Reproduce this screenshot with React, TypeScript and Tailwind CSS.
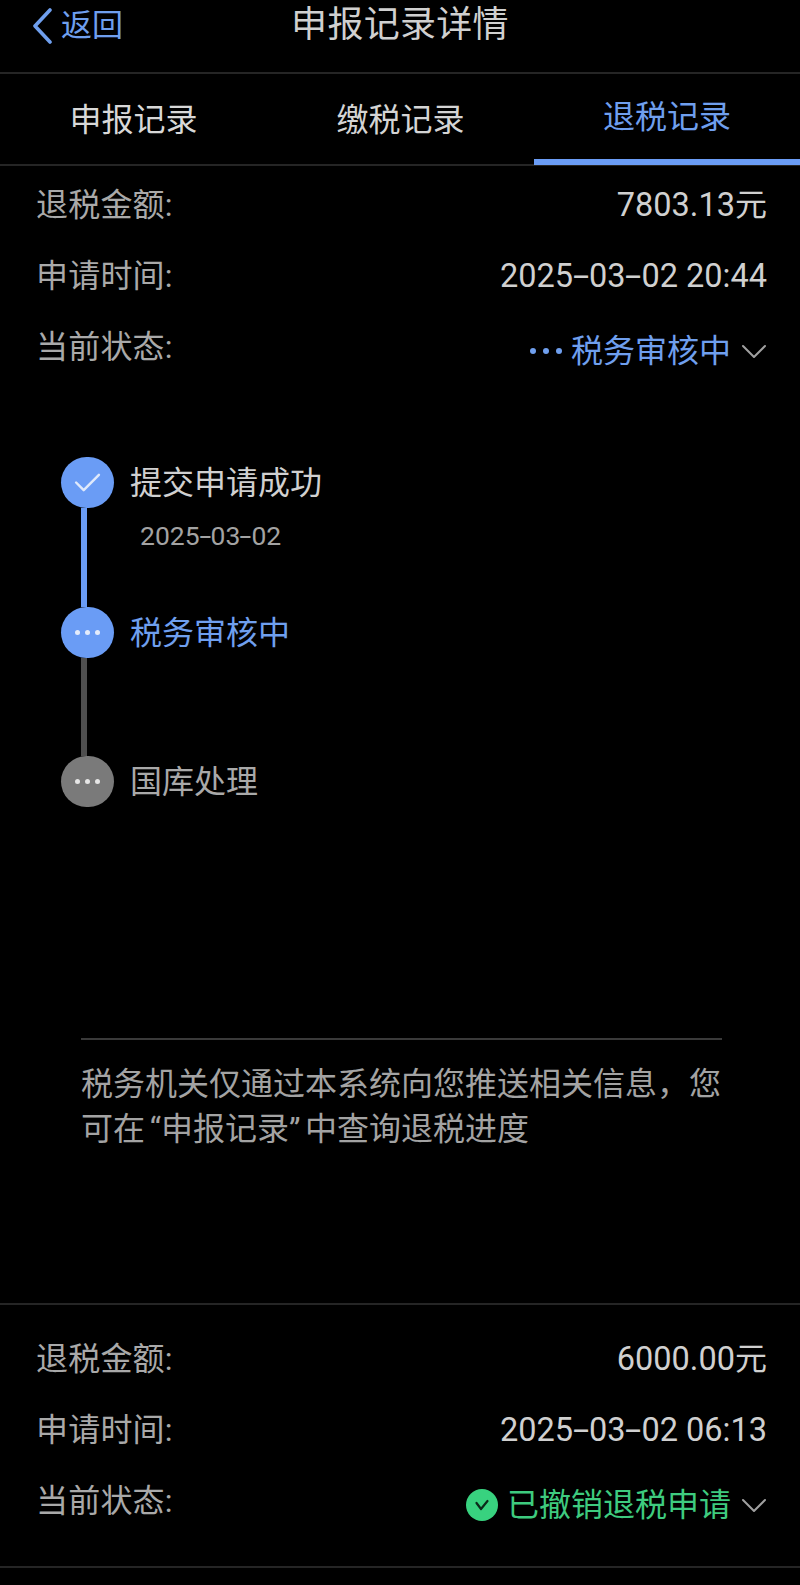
const font = "font-['Roboto','Noto_Sans_CJK_SC',sans-serif]";

function Chevron({ className }: { className: string }) {
  return (
    <svg viewBox="0 0 26 16" className={className} fill="none" stroke="currentColor" strokeWidth="2" strokeLinecap="round" strokeLinejoin="round">
      <path d="M2 3 L13 14 L24 3" />
    </svg>
  );
}

function DateText({ parts, hyphen }: { parts: string[]; hyphen: string }) {
  return (
    <>
      {parts.map((p, i) => (
        <span key={i}>
          {i > 0 && <span className={hyphen}>-</span>}
          {p}
        </span>
      ))}
    </>
  );
}

const rowHyphen = "inline-block w-[16px] text-center scale-x-[1.8]";
const smallHyphen = "inline-block w-[11px] text-center scale-x-[1.6]";

function Row({ label, children }: { label: string; children: React.ReactNode }) {
  return (
    <div className="flex justify-between items-center h-[71px] pl-[36px] pr-[33px]">
      <span className="text-[#a9a9a9] text-[32px] leading-none tracking-[0.2px] -mt-[1px]">{label}</span>
      <span className="text-[#d0d0d0] text-[32.5px] leading-none whitespace-nowrap">{children}</span>
    </div>
  );
}

function StatusRow({ children }: { children: React.ReactNode }) {
  return (
    <div className="flex justify-between items-center h-[71px] pl-[36px] pr-[33px]">
      <span className="text-[#a9a9a9] text-[32px] leading-none tracking-[0.2px] -mt-[1px]">当前状态:</span>
      <div className="flex items-center pt-[6px]">
        {children}
        <Chevron className="w-[26px] h-[16px] ml-[10px] text-[#a0a0a0]" />
      </div>
    </div>
  );
}

function Dots({ size = "w-[5px] h-[5px]", color = "bg-[#e4ecfb]", gap = "gap-[5px]" }: { size?: string; color?: string; gap?: string }) {
  return (
    <div className={`flex ${gap}`}>
      <span className={`${size} ${color} rounded-full`} />
      <span className={`${size} ${color} rounded-full`} />
      <span className={`${size} ${color} rounded-full`} />
    </div>
  );
}

export default function App() {
  return (
    <div className={`w-[800px] h-[1585px] bg-black overflow-hidden flex flex-col ${font}`}>
      <header className="relative h-[74px] border-b-2 border-[#252525] flex items-start shrink-0">
        <div className="flex items-center pl-[32px] pt-[3px] h-[44px] mt-[2px] text-[#6f9fee]">
          <svg viewBox="0 0 22 36" className="w-[22px] h-[36px]" fill="none" stroke="currentColor" strokeWidth="3.6" strokeLinecap="round" strokeLinejoin="round">
            <path d="M18 2 L3 18 L18 34" />
          </svg>
          <span className="text-[31px] leading-none ml-[7px]">返回</span>
        </div>
        <h1 className="absolute left-0 right-0 top-[4px] text-center text-[#d0d0d0] text-[36px] leading-[42px] font-normal tracking-[0.3px]">申报记录详情</h1>
      </header>
      <nav className="flex h-[92px] border-b-2 border-[#252525] shrink-0">
        <div className="w-[267px] flex items-center justify-center pt-[2px] text-[#d8d8d8] text-[32px] leading-none">申报记录</div>
        <div className="w-[267px] flex items-center justify-center pt-[2px] text-[#d4d4d4] text-[32px] leading-none">缴税记录</div>
        <div className="flex-1 flex items-center justify-center pt-[2px] pb-[1px] text-[#6f9fee] text-[32px] leading-none border-b-[6px] border-[#6a9cf5] mb-[-1px]">退税记录</div>
      </nav>
      <section className="pt-[4px] shrink-0">
        <Row label="退税金额:">7803.13<span className="text-[32px]">元</span></Row>
        <Row label="申请时间:"><DateText parts={["2025", "03", "02 20:44"]} hyphen={rowHyphen} /></Row>
        <StatusRow>
          <Dots size="w-[6px] h-[6px]" color="bg-[#6f9fee]" gap="gap-[7px]" />
          <span className="ml-[9px] text-[#6f9fee] text-[32px] leading-none">税务审核中</span>
        </StatusRow>
      </section>
      <section className="pl-[61px] pt-[74px] shrink-0">
        <div className="flex items-start">
          <div className="flex flex-col w-[53px]">
            <div className="w-[53px] h-[51px] rounded-full bg-[#6a9cf5] flex items-center justify-center">
              <svg viewBox="0 0 28 20" className="w-[27px] h-[19px]" fill="none" stroke="#dfe9fb" strokeWidth="2.6" strokeLinecap="round" strokeLinejoin="round">
                <path d="M2 10 L10 18 L26 2" />
              </svg>
            </div>
            <div className="w-[6px] h-[99px] ml-[20px] bg-[#6a9cf5]" />
          </div>
          <div className="ml-[16px] pt-[8px]">
            <div className="text-[#d0d0d0] text-[32px] leading-[36px]">提交申请成功</div>
            <div className="text-[#a3a3a3] text-[26.5px] leading-[30px] mt-[20px] ml-[10px] whitespace-nowrap"><DateText parts={["2025", "03", "02"]} hyphen={smallHyphen} /></div>
          </div>
        </div>
        <div className="flex items-start">
          <div className="flex flex-col w-[53px]">
            <div className="w-[53px] h-[51px] rounded-full bg-[#6a9cf5] flex items-center justify-center">
              <Dots />
            </div>
            <div className="w-[6px] h-[98px] ml-[20px] bg-[#4f4f4f]" />
          </div>
          <div className="ml-[16px] pt-[8px] text-[#6f9fee] text-[32px] leading-[36px]">税务审核中</div>
        </div>
        <div className="flex items-start">
          <div className="w-[53px] h-[51px] rounded-full bg-[#7a7a7a] flex items-center justify-center">
            <Dots color="bg-[#e6e6e6]" />
          </div>
          <div className="ml-[16px] pt-[8px] text-[#a9a9a9] text-[32px] leading-[36px]">国库处理</div>
        </div>
      </section>
      <section className="ml-[81px] mr-[78px] mt-[231px] border-t-2 border-[#3a3a3a] pt-[22px] shrink-0">
        <p className="text-[#a3a3a3] text-[32px] leading-[45px] whitespace-nowrap">
          税务机关仅通过本系统向您推送相关信息{"\uFF0C"}您<br />
          可在<span className="inline-block w-[16px] text-right">{"\u201C"}</span>申报记录<span className="inline-block w-[16px] text-left">{"\u201D"}</span>中查询退税进度
        </p>
      </section>
      <section className="mt-[151px] border-t-2 border-[#252525] pt-[19px] shrink-0">
        <Row label="退税金额:">6000.00<span className="text-[32px]">元</span></Row>
        <Row label="申请时间:"><DateText parts={["2025", "03", "02 06:13"]} hyphen={rowHyphen} /></Row>
        <StatusRow>
          <svg viewBox="0 0 32 32" className="w-[32px] h-[32px]">
            <circle cx="16" cy="16" r="16" fill="#38d27f" />
            <path d="M10.5 14 L15 20 L21.5 12" fill="none" stroke="#0b2a1a" strokeWidth="2.2" strokeLinecap="round" strokeLinejoin="round" />
          </svg>
          <span className="ml-[9px] text-[#3ecb7f] text-[32px] leading-none whitespace-nowrap">已撤销退税申请</span>
        </StatusRow>
      </section>
      <div className="mt-[29px] border-t-2 border-[#252525] shrink-0" />
    </div>
  );
}
